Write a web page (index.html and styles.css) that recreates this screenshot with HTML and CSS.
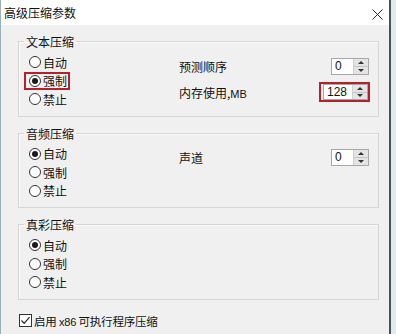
FILE: index.html
```html
<!DOCTYPE html>
<html lang="zh-CN">
<head>
  <meta charset="UTF-8">
  <title>高级压缩参数</title>
  <link rel="stylesheet" href="styles.css">
</head>
<body>

  <div class="window">
    <div class="titlebar">
      <span class="title">高级压缩参数</span>
      <svg class="close" width="11" height="11" viewBox="0 0 11 11">
        <path d="M0.5 0.5 L10.5 10.5 M10.5 0.5 L0.5 10.5" stroke="#222" stroke-width="1" fill="none"/>
      </svg>
    </div>

    <div class="content">
      <fieldset class="group">
        <legend>文本压缩</legend>
        <div class="group-body">
          <div class="radios">
            <label class="radio"><span class="dot"></span>自动</label>
            <label class="radio hl"><span class="dot on"></span>强制</label>
            <label class="radio"><span class="dot"></span>禁止</label>
          </div>
          <div class="fields">
            <span>预测顺序</span>
            <span class="spin"><span class="val">0</span><span class="arrows"><i class="up"></i><i class="down"></i></span></span>
            <span>内存使用,<small>MB</small></span>
            <span class="spin-hl"><span class="spin wide"><span class="val">128</span><span class="arrows"><i class="up"></i><i class="down"></i></span></span></span>
          </div>
        </div>
      </fieldset>

      <fieldset class="group">
        <legend>音频压缩</legend>
        <div class="group-body">
          <div class="radios">
            <label class="radio"><span class="dot on"></span>自动</label>
            <label class="radio"><span class="dot"></span>强制</label>
            <label class="radio"><span class="dot"></span>禁止</label>
          </div>
          <div class="fields">
            <span>声道</span>
            <span class="spin"><span class="val">0</span><span class="arrows"><i class="up"></i><i class="down"></i></span></span>
          </div>
        </div>
      </fieldset>

      <fieldset class="group">
        <legend>真彩压缩</legend>
        <div class="group-body">
          <div class="radios">
            <label class="radio"><span class="dot on"></span>自动</label>
            <label class="radio"><span class="dot"></span>强制</label>
            <label class="radio"><span class="dot"></span>禁止</label>
          </div>
        </div>
      </fieldset>

      <label class="check">
        <svg class="box" width="13" height="13" viewBox="0 0 13 13">
          <rect x="0.5" y="0.5" width="12" height="12" fill="#fff" stroke="#333"/>
          <path d="M2.5 6.5 L5.2 9.3 L10.5 3.2" stroke="#222" stroke-width="1.2" fill="none"/>
        </svg>
        <span class="check-text">启用 <small>x86</small> 可执行程序压缩</span>
      </label>
    </div>
  </div>

</body>
</html>
```

FILE: styles.css
```css
body {
  margin: 0;
  background: #e2ebeb;
  font-family: "Noto Sans CJK SC", "Microsoft YaHei", sans-serif;
  font-size: 12px;
  color: #111;
  overflow: hidden;
}
.window {
  width: 388px;
  height: 334px;
  background: #f0f0f0;
  border-left: 1px solid #9fb0b5;
  border-right: 2px solid #3f5556;
}
.titlebar {
  height: 25px;
  background: #fff;
  display: flex;
  align-items: center;
  justify-content: space-between;
  padding: 0 6px 0 3px;
}
.title { line-height: 17px; }
.close { margin-top: 3px; }

.content { padding: 8px 0 0 17px; }

.group {
  box-sizing: border-box;
  width: 361px;
  margin: 0 0 8px 0;
  padding: 3px 0 7px 0;
  border: 1px solid #d6d6d6;
  box-shadow: inset 1px 1px 0 #fafafa;
}
.group legend {
  margin-left: 5px;
  padding: 0 2px;
  line-height: 17px;
}
.group-body {
  display: flex;
  padding-left: 10px;
}
.radios {
  width: 150px;
  display: flex;
  flex-direction: column;
}
.radio {
  height: 18.5px;
  display: flex;
  align-items: center;
  gap: 2px;
}
.radio.hl {
  width: 38px;
  margin-left: -5px;
  padding: 0 3px 0 5px;
  box-shadow: inset 0 0 0 2px #b3212b;
}
.dot {
  box-sizing: border-box;
  width: 12px;
  height: 12px;
  border: 1px solid #333;
  border-radius: 50%;
  background: #fff;
  display: flex;
  align-items: center;
  justify-content: center;
}
.dot.on::after {
  content: "";
  width: 6px;
  height: 6px;
  border-radius: 50%;
  background: #1a1a1a;
}

.fields {
  display: grid;
  grid-template-columns: 140px 51px;
  grid-auto-rows: 26px;
  align-items: center;
}
.fields small, .check small { font-size: 11px; font-family: "Liberation Sans", sans-serif; }

.spin {
  box-sizing: border-box;
  justify-self: end;
  margin-right: 1px;
  width: 38px;
  height: 17px;
  display: flex;
  border: 1px solid #a8a8a8;
  background: #fff;
}
.spin .val {
  flex: 1;
  padding-left: 3px;
  font-family: "Liberation Sans", sans-serif;
  font-size: 12px;
  line-height: 15px;
}
.arrows {
  width: 14px;
  display: flex;
  flex-direction: column;
  background: #e4e4e4;
  border-left: 1px solid #cfcfcf;
}
.arrows i {
  flex: 1;
  display: flex;
  align-items: center;
  justify-content: center;
}
.arrows i.up { border-bottom: 1px solid #c4c4c4; }
.arrows i::after {
  content: "";
  border-left: 3px solid transparent;
  border-right: 3px solid transparent;
}
.arrows i.up::after { border-bottom: 3px solid #333; }
.arrows i.down::after { border-top: 3px solid #333; }

.spin-hl {
  box-sizing: border-box;
  width: 51px;
  height: 20px;
  padding: 0 0 0 2px;
  border: 2px solid #b3212b;
  display: flex;
}
.spin.wide {
  width: 45px;
  height: 16px;
  margin: 0;
}

.check {
  display: flex;
  align-items: center;
  gap: 2px;
  margin-top: 12px;
  margin-left: 1px;
  height: 18px;
}
.check-text { font-size: 11.5px; letter-spacing: -0.2px; }
```
